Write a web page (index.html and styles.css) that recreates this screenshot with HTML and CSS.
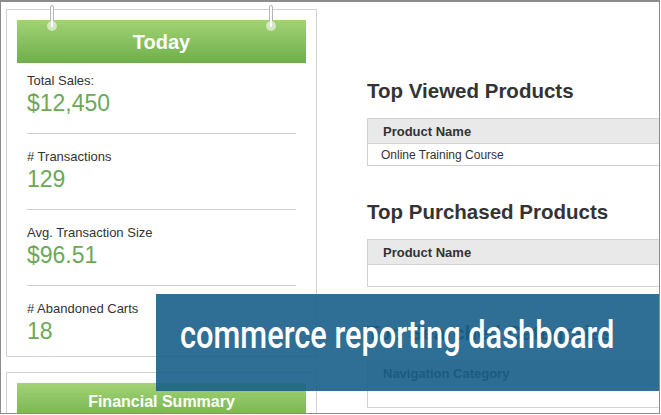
FILE: index.html
```html
<!DOCTYPE html>
<html lang="en">
<head>
    <meta charset="UTF-8">
    <title>Commerce Reporting Dashboard</title>
    <link rel="stylesheet" href="styles.css">
</head>
<body>
    <div class="frame">
        <aside class="sidebar">
            <div class="panel">
                <span class="ring ring-left"></span>
                <span class="ring ring-right"></span>
                <h2 class="panel-title">Today</h2>
                <div class="stat">
                    <div class="stat-label">Total Sales:</div>
                    <div class="stat-value">$12,450</div>
                </div>
                <div class="stat">
                    <div class="stat-label"># Transactions</div>
                    <div class="stat-value">129</div>
                </div>
                <div class="stat">
                    <div class="stat-label">Avg. Transaction Size</div>
                    <div class="stat-value">$96.51</div>
                </div>
                <div class="stat">
                    <div class="stat-label"># Abandoned Carts</div>
                    <div class="stat-value">18</div>
                </div>
            </div>

            <div class="panel">
                <h2 class="panel-title small">Financial Summary</h2>
            </div>
        </aside>

        <main class="reports">
            <section class="report">
                <h2>Top Viewed Products</h2>
                <table>
                    <tr><th>Product Name</th></tr>
                    <tr><td>Online Training Course</td></tr>
                </table>
            </section>

            <section class="report">
                <h2>Top Purchased Products</h2>
                <table>
                    <tr><th>Product Name</th></tr>
                    <tr><td></td></tr>
                </table>
            </section>

            <section class="report">
                <h2>Top Searched Categories</h2>
                <table>
                    <tr><th>Navigation Category</th></tr>
                    <tr><td></td></tr>
                </table>
            </section>
        </main>

        <div class="banner"><span class="banner-text">commerce reporting dashboard</span></div>
    </div>
</body>
</html>
```

FILE: styles.css
```css
:root {
    --green: #6da85a;
    --line: #d2d2d2;
    --text-color: #333;
}

* {
    margin: 0;
    padding: 0;
    box-sizing: border-box;
}

body {
    font-family: "Liberation Sans", Arial, sans-serif;
    color: var(--text-color);
    background: #fff;
}

.frame {
    position: relative;
    display: flex;
    align-items: flex-start;
    width: 660px;
    height: 414px;
    padding: 7px 0 0 5px;
    overflow: hidden;
    border: 1px solid #8c8c8c;
    border-top-width: 2px;
}

.sidebar {
    display: flex;
    flex-direction: column;
    gap: 15px;
    width: 311px;
    flex-shrink: 0;
}

.panel {
    position: relative;
    border: 1px solid var(--line);
    padding: 10px 10px 0;
}

.panel-title {
    height: 43px;
    line-height: 44px;
    text-align: center;
    color: #fff;
    font-size: 20px;
    font-weight: bold;
    background: linear-gradient(to bottom, #a2d274, #6fb04b);
}

.panel-title.small {
    font-size: 16px;
    height: 40px;
    line-height: 38px;
}

/* binder rings hanging the card */
.ring {
    position: absolute;
    top: -5px;
    width: 4px;
    height: 23px;
    border: 1px solid #b5b5b5;
    border-radius: 2px;
    background: #fff;
}

.ring::after {
    content: "";
    position: absolute;
    left: -4px;
    bottom: -4px;
    width: 10px;
    height: 10px;
    border-radius: 50%;
    background: rgba(255, 255, 255, 0.55);
}

.ring-left {
    left: 43px;
}

.ring-right {
    right: 43px;
}

.stat {
    margin: 0 10px;
    padding: 15px 0 16px;
    border-top: 1px solid var(--line);
}

.stat:first-of-type {
    padding-top: 10px;
    border-top: none;
}

.stat:last-of-type {
    padding-bottom: 11px;
}

.stat-label {
    font-size: 13px;
    line-height: 16px;
}

.stat-value {
    font-size: 23px;
    line-height: 28px;
    color: var(--green);
}

.reports {
    flex-shrink: 0;
    width: 360px;
    margin-left: 50px;
    padding-top: 70px;
}

.report {
    margin-bottom: 34px;
}

.report h2 {
    font-size: 20.5px;
    line-height: 24px;
    margin-bottom: 15px;
}

table {
    width: 100%;
    border-collapse: collapse;
    border: 1px solid var(--line);
}

th {
    height: 25px;
    padding-left: 15px;
    text-align: left;
    font-size: 13px;
    background: #e9e9e9;
    border-bottom: 1px solid var(--line);
}

td {
    height: 22px;
    padding-left: 13px;
    font-size: 12px;
}

.banner {
    position: absolute;
    left: 155px;
    top: 292px;
    right: 0;
    height: 97px;
    padding: 16px 0 0 24px;
    white-space: nowrap;
    color: #fff;
    font-family: Roboto, "Liberation Sans", sans-serif;
    font-weight: 500;
    font-size: 38px;
    line-height: 50px;
    background: rgba(24, 95, 138, 0.9);
}

.banner-text {
    display: inline-block;
    transform: scaleX(0.81);
    transform-origin: left center;
}
```
